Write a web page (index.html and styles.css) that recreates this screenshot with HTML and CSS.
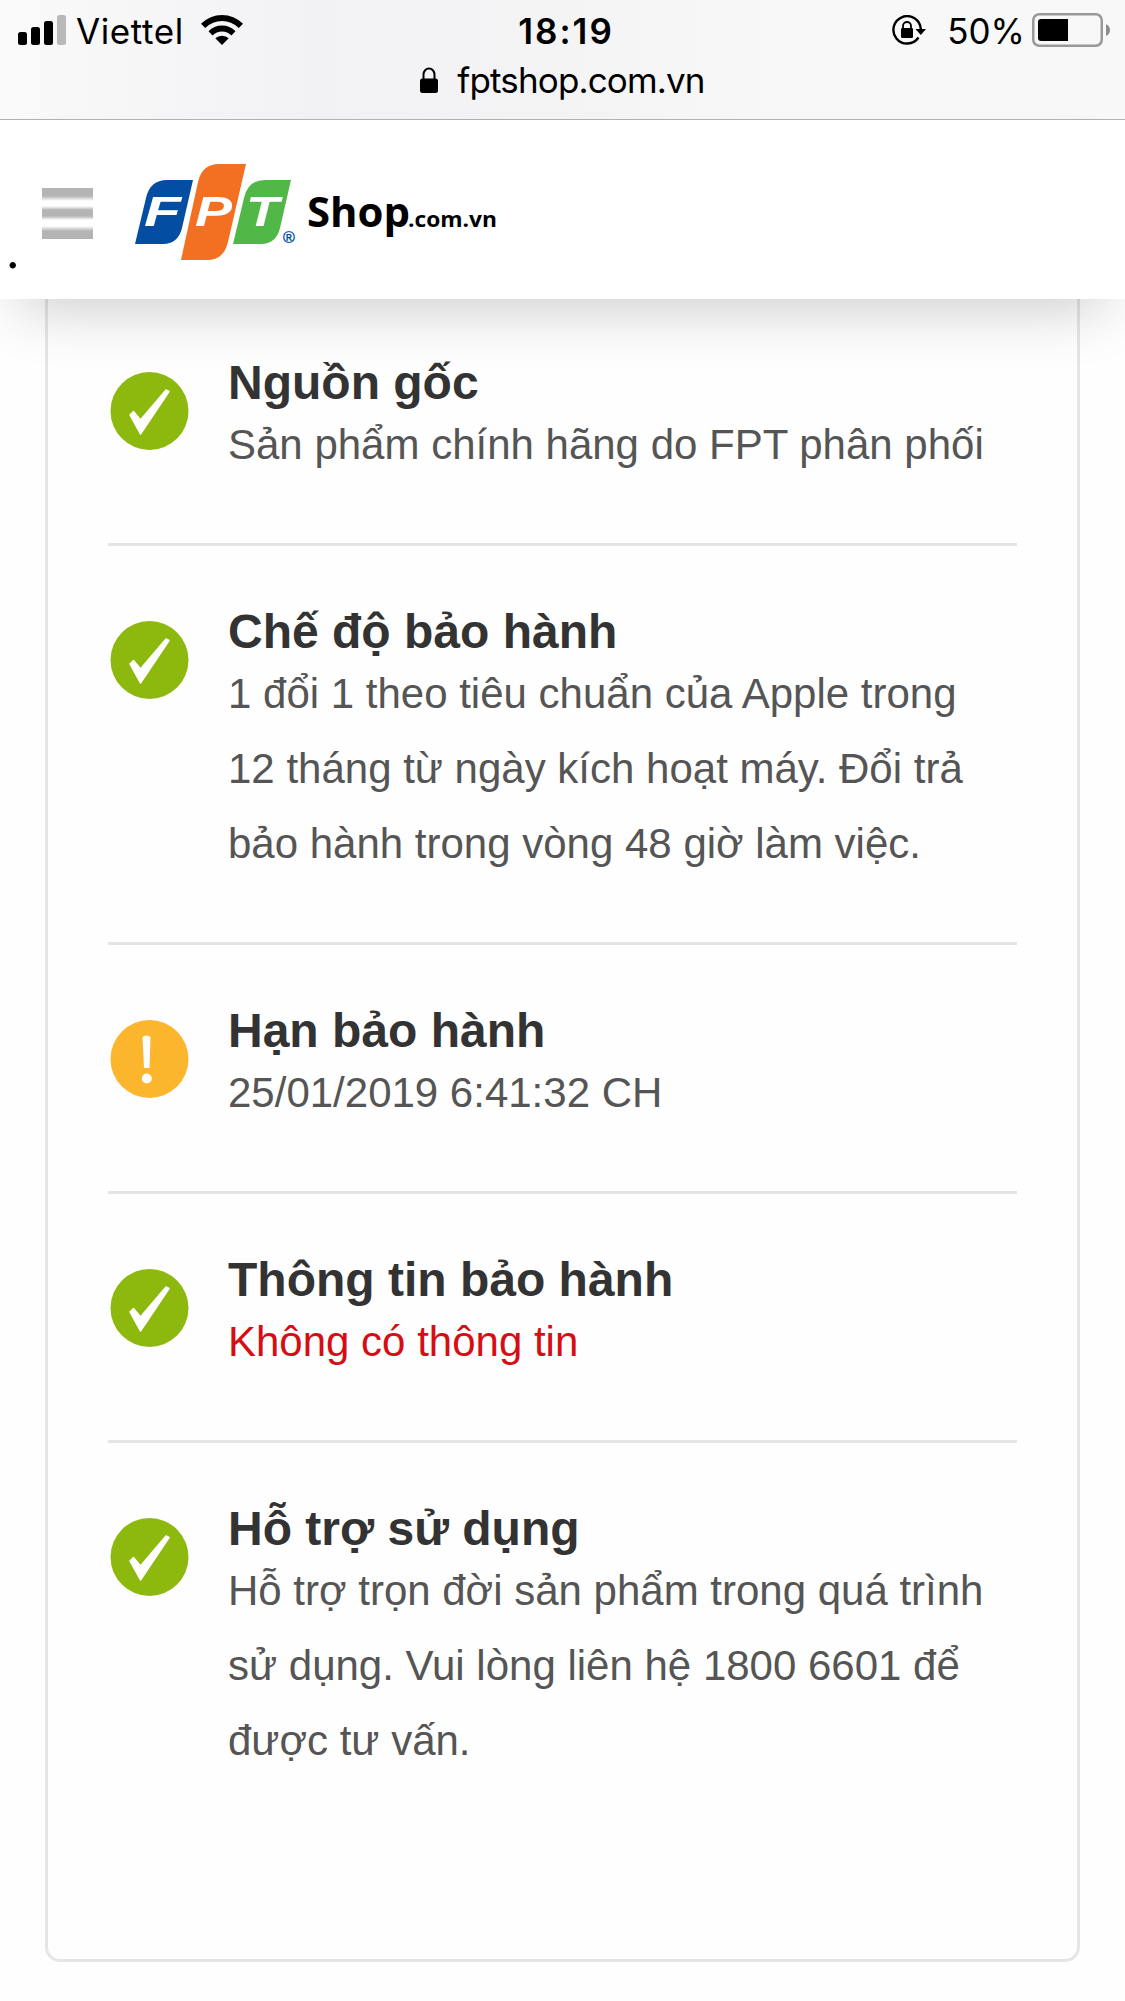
FILE: index.html
```html
<!DOCTYPE html>
<html lang="vi">
<head>
    <meta charset="UTF-8">
    <meta name="viewport" content="width=device-width, initial-scale=1.0">
    <title>FPT Shop - Thông tin bảo hành</title>
    <link rel="stylesheet" href="styles.css">
</head>
<body>
    <!-- Browser bar -->
    <div class="browser-bar">
        <div class="status">
            <div class="status-left">
                <svg class="signal" width="48" height="30" viewBox="0 0 48 30">
                    <rect x="0" y="17" width="9" height="13" rx="2.5"/>
                    <rect x="13" y="12" width="9" height="18" rx="2.5"/>
                    <rect x="26" y="6" width="9" height="24" rx="2.5"/>
                    <rect x="39" y="0" width="9" height="30" rx="2.5" fill="#b9b9b9"/>
                </svg>
                <span class="carrier">Viettel</span>
                <svg class="wifi" width="42" height="30" viewBox="0 0 42 30">
                    <path d="M0 8.8Q9 0 21 0T42 8.8L37.8 13Q30.500 6 21 6T4.200 13Z"/>
                    <path d="M7.500 16.300Q13 10.500 21 10.500T34.500 16.300L30.400 20.400Q26.500 16.500 21 16.500T11.600 20.400Z"/>
                    <path d="M14.300 23.300Q17 20.800 21 20.800T27.700 23.300L21 30Z"/>
                </svg>
            </div>
            <span class="time">18:19</span>
            <div class="status-right">
                <svg class="rotate-lock" width="34" height="30" viewBox="0 0 34 30">
                    <path d="M26.500 22.500A13.700 13.700 0 1 1 28.800 14" fill="none" stroke="#000" stroke-width="2.400"/>
                    <path d="M23.500 14H34L28.800 20Z"/>
                    <rect x="9" y="13" width="12" height="10" rx="1.200"/>
                    <path d="M11 14V11a4 4 0 0 1 8 0V14" fill="none" stroke="#000" stroke-width="1.800"/>
                </svg>
                <span class="percent">50%</span>
                <svg class="battery" width="78" height="34" viewBox="0 0 78 34">
                    <rect x="1.250" y="1.250" width="68.500" height="31.500" rx="6" fill="none" stroke="#999" stroke-width="2.500"/>
                    <path d="M36 6V28H9a3 3 0 0 1-3-3V9a3 3 0 0 1 3-3Z"/>
                    <path d="M74 11Q78 13 78 17T74 23Z" fill="#8c8c8c"/>
                </svg>
            </div>
        </div>
        <div class="address">
            <svg width="18" height="26" viewBox="0 0 18 26">
                <rect x="0" y="11.500" width="18" height="14.500" rx="2.500"/>
                <path d="M3.500 13V7.500a5.500 6 0 0 1 11 0V13" fill="none" stroke="#000" stroke-width="2"/>
            </svg>
            <span>fptshop.com.vn</span>
        </div>
    </div>

    <header>
        <span class="dot">.</span>
        <div class="menu"></div>
        <svg class="logo" width="370" height="100" viewBox="0 0 370 100">
            <path d="M0 80L11 34Q15 16 32 16H58L47 64Q43 80 28 80Z" fill="#034ea2"/>
            <path d="M46 96L63 18Q67 0 84 0H111L93 78Q89 96 72 96Z" fill="#f36f21"/>
            <path d="M98 80L109 34Q113 16 130 16H156L145 64Q141 80 126 80Z" fill="#51b848"/>
            <g class="logo-fpt">
                <text x="9" y="62" textLength="37" lengthAdjust="spacingAndGlyphs">F</text>
                <text x="60" y="62" textLength="37" lengthAdjust="spacingAndGlyphs">P</text>
                <text x="111" y="62" textLength="33" lengthAdjust="spacingAndGlyphs">T</text>
            </g>
            <text class="logo-reg" x="148" y="79">®</text>
            <text class="logo-shop" x="172" y="63" textLength="103" lengthAdjust="spacingAndGlyphs">Shop</text>
            <text class="logo-domain" x="273" y="63" textLength="89" lengthAdjust="spacingAndGlyphs">.com.vn</text>
        </svg>
    </header>

    <!-- Warranty info -->
    <main class="card">
        <section class="item">
            <svg class="icon" width="79" height="79" viewBox="0 0 79 79">
                <circle cx="39.500" cy="39" r="39" fill="#8db90f"/>
                <path d="M20 43L23.500 39.500L30.500 48L56 18L59 19.500L30.500 62Z" fill="#fff" stroke="#fff" stroke-width="1.500" stroke-linejoin="round"/>
            </svg>
            <div class="text">
                <h3>Nguồn gốc</h3>
                <p>Sản phẩm chính hãng do FPT phân phối</p>
            </div>
        </section>
        <section class="item">
            <svg class="icon" width="79" height="79" viewBox="0 0 79 79">
                <circle cx="39.500" cy="39" r="39" fill="#8db90f"/>
                <path d="M20 43L23.500 39.500L30.500 48L56 18L59 19.500L30.500 62Z" fill="#fff" stroke="#fff" stroke-width="1.500" stroke-linejoin="round"/>
            </svg>
            <div class="text">
                <h3>Chế độ bảo hành</h3>
                <p>1 đổi 1 theo tiêu chuẩn của Apple trong<br>12 tháng từ ngày kích hoạt máy. Đổi trả<br>bảo hành trong vòng 48 giờ làm việc.</p>
            </div>
        </section>
        <section class="item">
            <svg class="icon" width="79" height="79" viewBox="0 0 79 79">
                <circle cx="39.500" cy="39" r="39" fill="#fcb62e"/>
                <path d="M32.500 17Q36.500 14 40.500 17L39.500 48H34Z" fill="#fff"/>
                <circle cx="36.800" cy="58.500" r="5" fill="#fff"/>
            </svg>
            <div class="text">
                <h3>Hạn bảo hành</h3>
                <p>25/01/2019 6:41:32 CH</p>
            </div>
        </section>
        <section class="item">
            <svg class="icon" width="79" height="79" viewBox="0 0 79 79">
                <circle cx="39.500" cy="39" r="39" fill="#8db90f"/>
                <path d="M20 43L23.500 39.500L30.500 48L56 18L59 19.500L30.500 62Z" fill="#fff" stroke="#fff" stroke-width="1.500" stroke-linejoin="round"/>
            </svg>
            <div class="text">
                <h3>Thông tin bảo hành</h3>
                <p class="red">Không có thông tin</p>
            </div>
        </section>
        <section class="item">
            <svg class="icon" width="79" height="79" viewBox="0 0 79 79">
                <circle cx="39.500" cy="39" r="39" fill="#8db90f"/>
                <path d="M20 43L23.500 39.500L30.500 48L56 18L59 19.500L30.500 62Z" fill="#fff" stroke="#fff" stroke-width="1.500" stroke-linejoin="round"/>
            </svg>
            <div class="text">
                <h3>Hỗ trợ sử dụng</h3>
                <p>Hỗ trợ trọn đời sản phẩm trong quá trình<br>sử dụng. Vui lòng liên hệ 1800 6601 để<br>được tư vấn.</p>
            </div>
        </section>
    </main>
</body>
</html>
```
FILE: styles.css
```css
* {
    box-sizing: border-box;
}
body {
    font-family: "Liberation Sans", Arial, sans-serif;
    margin: 0;
    height: 2001px;
    overflow: hidden;
    background: #fefefe;
    color: #333;
}
svg {
    display: block;
    flex-shrink: 0;
}
.browser-bar {
    height: 120px;
    border-bottom: 1px solid #b2b2b2;
    background: linear-gradient(90deg, #fafafa 0, #f2f2f5 28%, #f4f4f5 50%, #f8f8f8 68%, #f8f8f8 100%);
    color: #000;
    font-family: Inter, sans-serif;
    font-size: 35px;
    white-space: nowrap;
}
.status {
    display: grid;
    grid-template-columns: 1fr auto 1fr;
    align-items: center;
    height: 60px;
    padding: 0 15px 0 18px;
}
.status-left, .status-right {
    display: flex;
    align-items: center;
}
.status-right {
    justify-content: flex-end;
}
.carrier {
    margin: 2px 17px 0 10px;
    letter-spacing: 0.6px;
}
.time {
    margin-top: 2px;
    padding-left: 4px;
    font-weight: 600;
    letter-spacing: 2px;
}
.percent {
    margin: 2px 7px 0 21px;
}
.address {
    display: flex;
    justify-content: center;
    align-items: center;
    gap: 19px;
    height: 40px;
    letter-spacing: -0.85px;
}
header {
    position: relative;
    display: flex;
    align-items: flex-start;
    height: 179px;
    padding-top: 44px;
    background: #fff;
    box-shadow: 0 30px 60px -20px rgba(0, 0, 0, 0.2);
}
.dot {
    width: 42px;
    padding: 59px 0 0 6px;
    font: 54px/54px "Liberation Serif", serif;
    color: #000;
}
.menu {
    width: 51px;
    height: 51px;
    margin: 24px 42px 0 0;
    background: linear-gradient(#b4b4b4 0 8px, #fff 13px 18px, #b4b4b4 22px 28px, #fff 32px 38px, #b4b4b4 43px 51px);
}
.logo-fpt {
    font: italic bold 43px "Liberation Sans", sans-serif;
    fill: #fff;
}
.logo-reg {
    font: 16px "Liberation Sans", sans-serif;
    fill: #034ea2;
    stroke: #034ea2;
    stroke-width: 0.4px;
}
.logo-shop {
    font: bold 41px "Open Sans", sans-serif;
    fill: #000;
}
.logo-domain {
    font: bold 22px "Open Sans", sans-serif;
    fill: #000;
}
.card {
    width: 1035px;
    height: 1663px;
    margin: 0 auto;
    padding: 0 60px;
    border: 3px solid #e5e5e5;
    border-top: none;
    border-radius: 0 0 15px 15px;
}
.item {
    display: flex;
    padding: 48px 0 61px;
    border-bottom: 3px solid #e5e5e5;
}
.item:first-child {
    padding-top: 46px;
}
.item:last-child {
    border-bottom: none;
}
.icon {
    margin: 27px 39px 0 2px;
}
h3 {
    margin: 0;
    font-size: 48px;
    line-height: 75px;
}
p {
    margin: 0;
    margin-top: -13px;
    font-size: 42px;
    line-height: 75px;
    color: #555;
    white-space: nowrap;
}
p.red {
    color: #d60d12;
}
```
